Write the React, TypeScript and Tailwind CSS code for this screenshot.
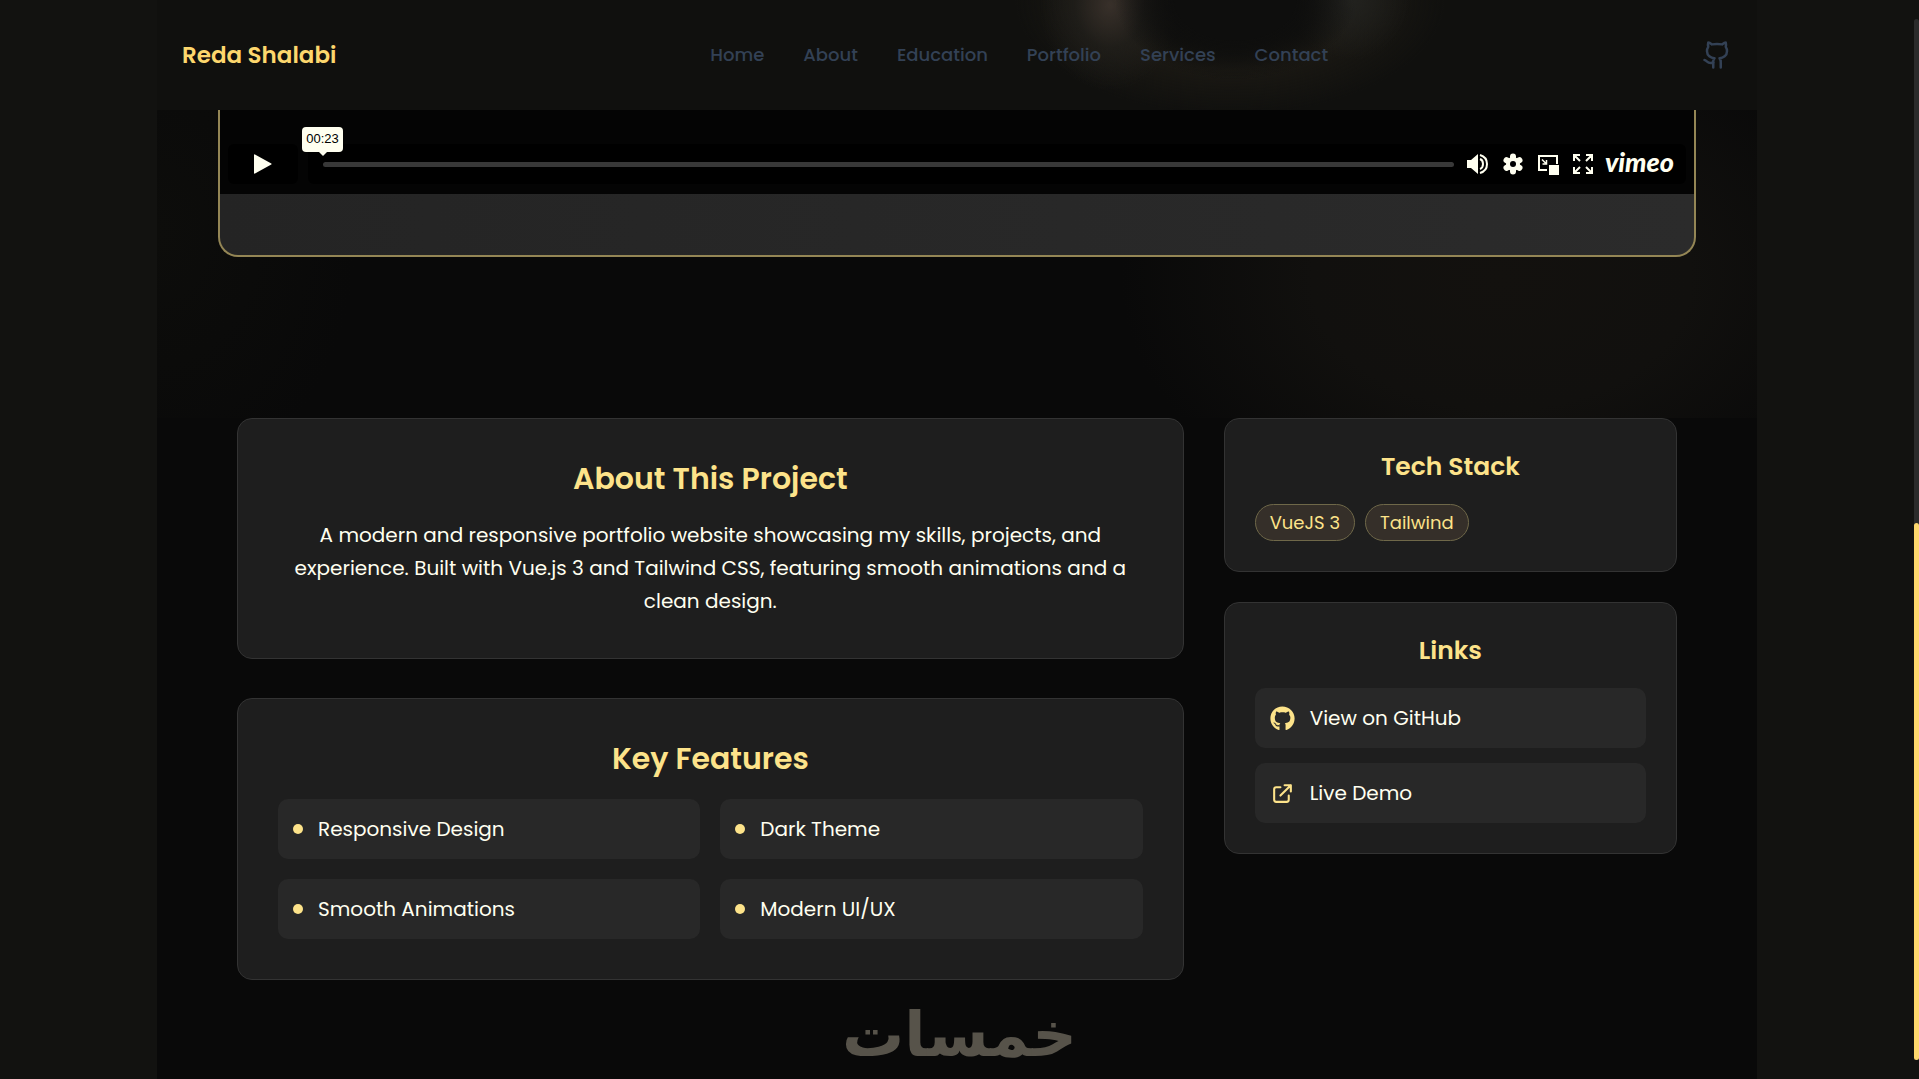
import React, {useState} from "react";
import {FaGithub} from "react-icons/fa";
import {Github} from "lucide-react";

const navItems = ["Home", "About", "Education", "Portfolio", "Services", "Contact"];
const features = ["Responsive Design", "Dark Theme", "Smooth Animations", "Modern UI/UX"];
const stack = ["VueJS 3", "Tailwind"];

const Header = () => (
    <header
        className="flex h-[110px] items-center justify-between bg-[#10100e] bg-[radial-gradient(ellipse_120px_80px_at_1235px_0px,#0e0e0d_0%,#0e0e0d_50%,transparent_100%),radial-gradient(ellipse_70px_85px_at_1110px_5px,#38302a_0%,#25231f88_50%,transparent_100%),radial-gradient(ellipse_60px_60px_at_1350px_0px,#22221f_0%,transparent_100%),radial-gradient(ellipse_215px_115px_at_1230px_0px,#0f0f0e_0%,#10100e_40%,#1a1813_60%,transparent_100%)] bg-[position:-157px_0] px-[25px]">
        <a href="#home" className="text-[23px] leading-8 font-semibold text-[#fdd76d]">Reda Shalabi</a>
        <nav className="flex gap-[39px]">
            {navItems.map((item) => (
                <a key={item} href={`#${item.toLowerCase()}`}
                   className="text-[18px] leading-7 font-medium text-[#334155]">
                    {item}
                </a>
            ))}
        </nav>
        <a href="#github" aria-label="GitHub profile" className="text-[#334155]">
            <Github size={30} strokeWidth={2}/>
        </a>
    </header>
);

const VideoPlayer = () => {
    const [position, setPosition] = useState(0);

    return (
        <div
            className="overflow-hidden rounded-b-[20px] border-2 border-t-0 border-[#948655] bg-linear-to-r from-[#242424] to-[#2b2b2b] pb-[61px]">
            <div className="flex gap-[10px] bg-[#040404] px-2 pt-[34px] pb-[10px]">
                <button aria-label="Play"
                        className="flex h-10 w-[70px] items-center justify-center rounded-md bg-black text-[#fffff0]">
                    <svg width="18" height="20" viewBox="0 0 18 20" fill="currentColor">
                        <path d="M0 1Q0 0 1 .4L17.3 9.4Q18 10 17.3 10.6L1 19.6Q0 20 0 19Z"/>
                    </svg>
                </button>
                <div className="flex h-10 flex-1 items-center rounded-md bg-black pr-3 pl-[15px] text-[#fffff0]">
                    <div className="relative mr-[7px] flex flex-1 items-center">
                        <input
                            type="range"
                            aria-label="Seek"
                            min="0"
                            max="100"
                            value={position}
                            onChange={(e) => setPosition(Number(e.target.value))}
                            className="h-[5px] w-full cursor-pointer appearance-none rounded-sm bg-[#383838] [&::-webkit-slider-thumb]:h-0 [&::-webkit-slider-thumb]:w-0 [&::-webkit-slider-thumb]:appearance-none"
                        />
                        <span
                            className="absolute bottom-[15px] -left-[21px] flex h-[25px] w-[41px] items-center justify-center rounded bg-[#fffff0] font-['Liberation_Sans',sans-serif] text-[13px] leading-4 text-black after:absolute after:top-full after:border-4 after:border-b-0 after:border-transparent after:border-t-[#fffff0]">
                            00:23
                        </span>
                    </div>
                    <button aria-label="Volume" className="flex w-[35px] justify-center">
                        <svg width="22" height="22" viewBox="0 0 22 22" fill="none" stroke="currentColor"
                             strokeWidth="2">
                            <path d="M0 7H4L11 1V21L4 15H0Z" fill="currentColor" stroke="none"/>
                            <path d="M13 6Q16 7 16 11T13 16M13 2Q20 4 20 11T13 20"/>
                        </svg>
                    </button>
                    <button aria-label="Settings" className="flex w-[35px] justify-center">
                        <svg width="22" height="22" viewBox="0 0 22 22">
                            <g stroke="currentColor" strokeWidth="6" strokeLinecap="round">
                                <path d="M11 3.5V18.5M4.5 7.2L17.5 14.8M4.5 14.8L17.5 7.2"/>
                            </g>
                            <circle cx="11" cy="11" r="7" fill="currentColor"/>
                            <circle cx="11" cy="11" r="3" fill="#000"/>
                        </svg>
                    </button>
                    <button aria-label="Picture in picture" className="flex w-[35px] justify-center">
                        <svg width="22" height="22" viewBox="0 0 22 22" fill="none" stroke="currentColor"
                             strokeWidth="2">
                            <path d="M10 17H2V3H20V11"/>
                            <path d="M5 6.500L9 10.500M9.500 7V11H5.500" strokeWidth="1.500"/>
                            <path d="M12 12H22V22H12Z" fill="currentColor" stroke="none"/>
                        </svg>
                    </button>
                    <button aria-label="Fullscreen" className="flex w-[35px] justify-center">
                        <svg width="20" height="20" viewBox="0 0 20 20" fill="none" stroke="currentColor"
                             strokeWidth="2">
                            <path
                                d="M1 7V1H7M1 1L7 7M13 1H19V7M19 1L13 7M1 13V19H7M1 19L7 13M19 13V19H13M19 19L13 13"/>
                        </svg>
                    </button>
                    <a href="#vimeo"
                       className="pb-1 pl-1 font-[Lato,sans-serif] text-[27px] leading-7 font-black italic">vimeo</a>
                </div>
            </div>
        </div>
    );
};

const Card = ({title, children}: { title: string; children: React.ReactNode }) => (
    <section className="rounded-[15px] border border-[#333333] bg-[#1e1e1e] p-10">
        <h2 className="mb-5 text-center text-[30px] leading-10 font-semibold text-[#fde38a]">{title}</h2>
        {children}
    </section>
);

const SideCard = ({title, children}: { title: string; children: React.ReactNode }) => (
    <section className="rounded-[15px] border border-[#333333] bg-[#1e1e1e] p-[30px]">
        <h3 className="mb-5 text-center text-[25px] leading-[35px] font-semibold text-[#fde38a]">{title}</h3>
        {children}
    </section>
);

const linkClass = "flex h-[60px] items-center gap-[15px] rounded-[10px] bg-[#282828] px-[15px] text-[20px] text-[#fffff0]";

export default function App() {
    return (
        <div
            className="relative min-h-screen overflow-hidden bg-[#121210] pr-[5px] font-[Poppins,Inter,sans-serif]">
            <div className="mx-auto flex min-h-screen max-w-[1600px] flex-col bg-[#090909]">
                <Header/>

                <div
                    className="bg-[radial-gradient(ellipse_380px_260px_at_84%_55%,#13110e_0%,#11100e_50%,transparent_100%),radial-gradient(ellipse_200px_260px_at_0%_40%,#0d0d0b_0%,transparent_100%)] px-[61px] pb-[161px]">
                    <VideoPlayer/>
                </div>

                <main className="grid grid-cols-3 items-start gap-10 px-20">
                    <div className="col-span-2 flex flex-col gap-[39px]">
                        <Card title="About This Project">
                            <p className="text-center text-[20px] leading-[33px] text-[#fffff0]">
                                A modern and responsive portfolio website showcasing my skills, projects, and
                                experience. Built with Vue.js 3 and Tailwind CSS, featuring smooth animations and a
                                clean design.
                            </p>
                        </Card>

                        <Card title="Key Features">
                            <ul className="grid grid-cols-2 gap-5">
                                {features.map((feature) => (
                                    <li key={feature} className={linkClass}>
                                        <span className="size-[10px] rounded-full bg-[#fde38a]"></span>
                                        {feature}
                                    </li>
                                ))}
                            </ul>
                        </Card>
                    </div>

                    <aside className="flex flex-col gap-[30px]">
                        <SideCard title="Tech Stack">
                            <div className="flex flex-wrap gap-[10px]">
                                {stack.map((tech) => (
                                    <span key={tech}
                                          className="rounded-full border border-[#6f6849] bg-[#352f29] px-[14px] text-[18px] leading-[35px] text-[#fde38a]">
                                        {tech}
                                    </span>
                                ))}
                            </div>
                        </SideCard>

                        <SideCard title="Links">
                            <div className="flex flex-col gap-[15px]">
                                <a href="#repo" className={linkClass}>
                                    <FaGithub className="size-[25px] text-[#fde38a]"/>
                                    View on GitHub
                                </a>
                                <a href="#demo" className={linkClass}>
                                    <svg className="size-[25px] text-[#fde38a]" viewBox="0 0 24 24" fill="none"
                                         stroke="currentColor" strokeWidth="2" strokeLinecap="round"
                                         strokeLinejoin="round">
                                        <path
                                            d="M10 6H6a2 2 0 00-2 2v10a2 2 0 002 2h10a2 2 0 002-2v-4M14 4h6m0 0v6m0-6L10 14"/>
                                    </svg>
                                    Live Demo
                                </a>
                            </div>
                        </SideCard>
                    </aside>
                </main>
            </div>

            {/* Watermark */}
            <div
                dir="rtl" lang="ar"
                className="pointer-events-none absolute inset-x-0 bottom-0 text-center font-['DejaVu_Sans',sans-serif] text-[62px] leading-[88px] font-bold text-[#57534a]">
                خمسات
            </div>

            {/* Custom scrollbar */}
            <div className="absolute top-[19px] right-0 bottom-[19px] flex w-[5px] flex-col rounded-full bg-[#2b2b2b]">
                <div className="mt-auto h-[51.6%] rounded-full bg-[#fdd76d]"></div>
            </div>
        </div>
    );
}
